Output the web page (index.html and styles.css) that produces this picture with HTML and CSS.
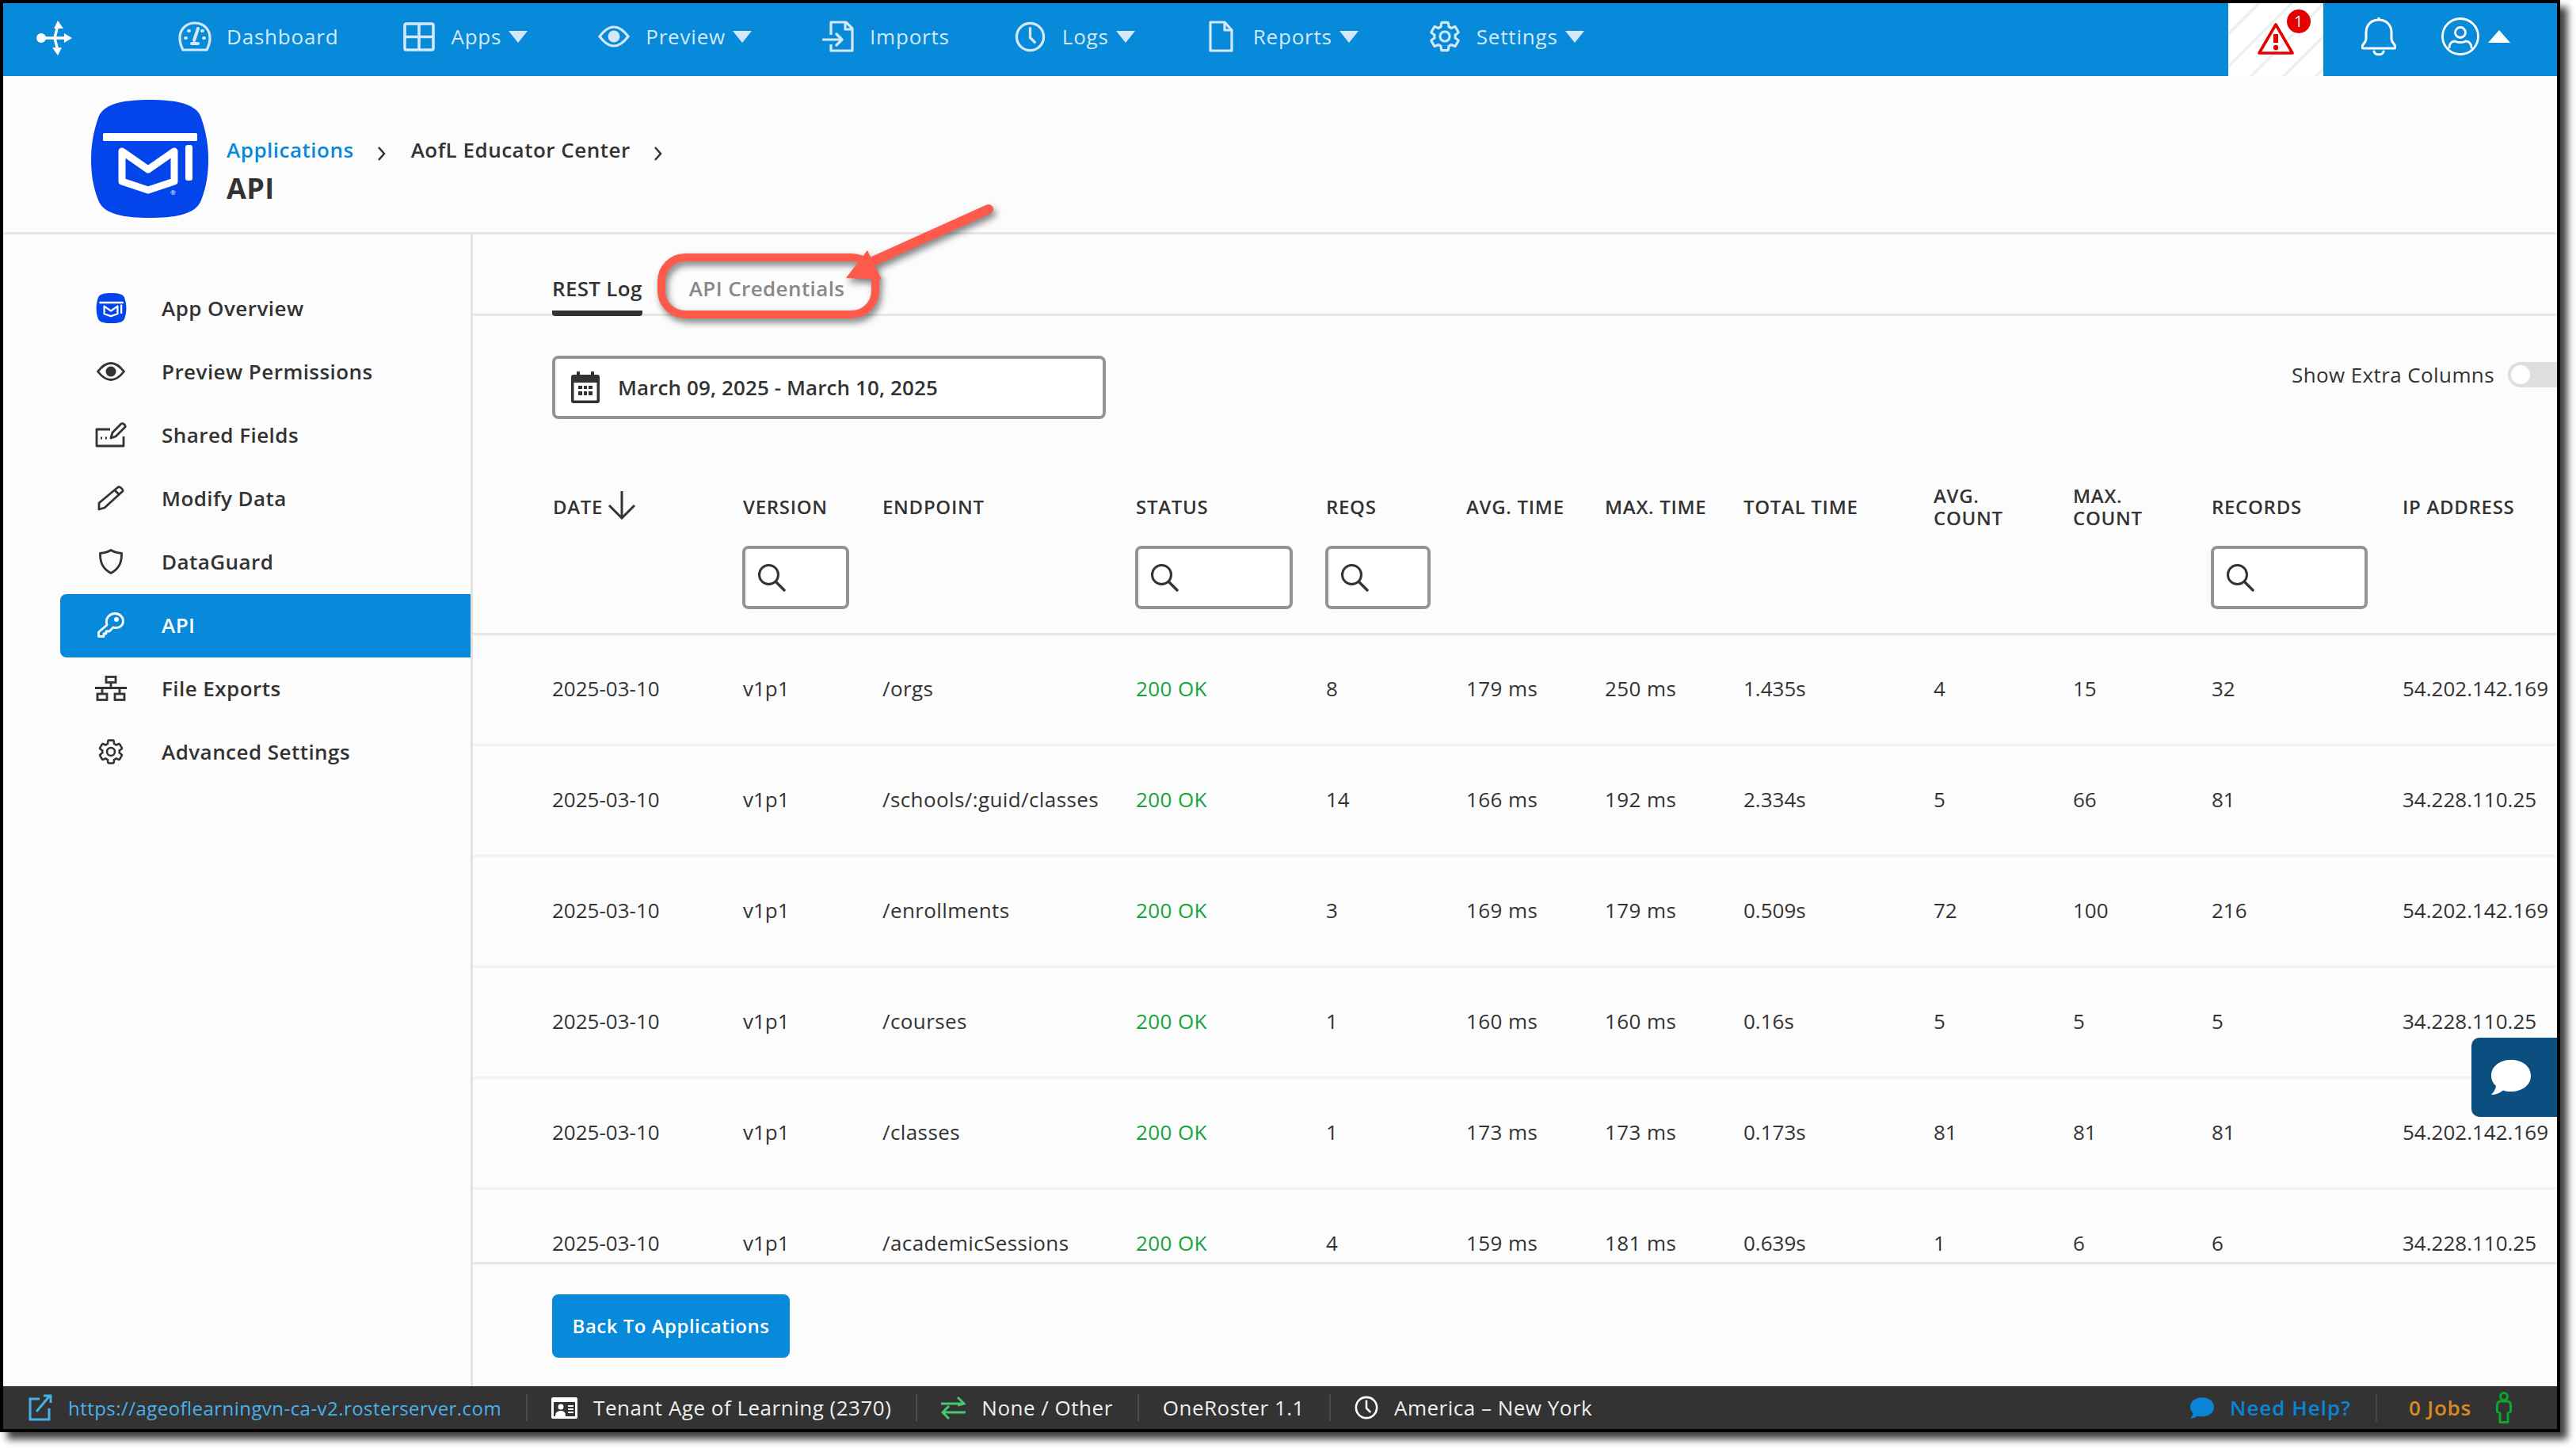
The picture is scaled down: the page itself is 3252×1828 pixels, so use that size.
FILE: index.html
```html
<!DOCTYPE html>
<html lang="en">
<head>
    <meta charset="UTF-8">
    <title>API - AofL Educator Center</title>
    <link rel="stylesheet" href="styles.css">
</head>
<body>
    <svg class="defs" width="0" height="0">
        <symbol id="logo" viewBox="0 0 148 149">
            <path fill="#0445eb" d="M74 0C105 0 130 4 138 20C146 42 148 60 148 75C148 92 146 110 138 129C130 145 105 149 74 149C43 149 18 145 10 129C2 110 0 92 0 75C0 60 2 42 10 20C18 4 43 0 74 0Z"/>
            <rect x="15" y="42" width="119" height="10" rx="1.5" fill="#fff"/>
            <path fill="none" stroke="#fff" stroke-width="9" stroke-linejoin="round" d="M39 65L72 88L105 65V103L72 114L39 103Z"/>
            <rect x="119" y="57" width="9" height="45" rx="3" fill="#fff"/>
        </symbol>
        <symbol id="gear" viewBox="0 0 24 24">
            <path fill="none" stroke="currentColor" stroke-width="1.7" d="M19.14 12.94c.04-.3.06-.61.06-.94 0-.32-.02-.64-.07-.94l2.03-1.58c.18-.14.23-.41.12-.61l-1.92-3.32c-.12-.22-.37-.29-.59-.22l-2.39.96c-.5-.38-1.03-.7-1.62-.94l-.36-2.54c-.04-.24-.24-.41-.48-.41h-3.84c-.24 0-.43.17-.47.41l-.36 2.54c-.59.24-1.13.57-1.62.94l-2.39-.96c-.22-.08-.47 0-.59.22L2.74 8.87c-.12.21-.08.47.12.61l2.03 1.58c-.05.3-.09.63-.09.94s.02.64.07.94l-2.03 1.58c-.18.14-.23.41-.12.61l1.92 3.32c.12.22.37.29.59.22l2.39-.96c.5.38 1.03.7 1.62.94l.36 2.54c.05.24.24.41.48.41h3.84c.24 0 .44-.17.47-.41l.36-2.54c.59-.24 1.13-.56 1.62-.94l2.39.96c.22.08.47 0 .59-.22l1.92-3.32c.12-.22.07-.47-.12-.61l-2.01-1.58z"/>
            <circle cx="12" cy="12" r="3.3" fill="none" stroke="currentColor" stroke-width="1.7"/>
        </symbol>
        <symbol id="clock" viewBox="0 0 40 40">
            <circle cx="20" cy="20" r="17.5" fill="none" stroke="currentColor" stroke-width="3.4"/>
            <path fill="none" stroke="currentColor" stroke-width="3.4" stroke-linecap="round" stroke-linejoin="round" d="M20 9V21L26 27"/>
        </symbol>
        <symbol id="search" viewBox="0 0 36 36">
            <circle cx="14.5" cy="14.5" r="12" fill="none" stroke="#333" stroke-width="3"/>
            <path stroke="#333" stroke-width="3.4" stroke-linecap="round" d="M23.500 23.500L34 34"/>
        </symbol>
        <symbol id="bubble" viewBox="0 0 50 44">
            <path fill="currentColor" d="M25 0C39 0 50 8 50 20C50 32 39 40 25 40C21 40 18 39.500 15 38.500C11 42 6 44 0 44C3 41 5.500 37 6 33C2 29.500 0 25 0 20C0 8 11 0 25 0Z"/>
        </symbol>
    </svg>

    <div class="frame">
        <header class="topnav">
            <svg class="nav-logo" width="46" height="44" viewBox="0 0 46 44">
                <g fill="none" stroke="#fff" stroke-width="3.400" stroke-linecap="round">
                    <path d="M8 22H42M24 22L28 6M24 22L28 38"/>
                </g>
                <g fill="#fff">
                    <circle cx="7" cy="22" r="6"/>
                    <path d="M28 0L35 10H23ZM46 22L36 16V28ZM28 44L21 34H33Z"/>
                </g>
            </svg>

            <a class="nav-item">
                <span class="nav-icon">
                    <svg width="42" height="38" viewBox="0 0 42 38" fill="none" stroke="currentColor" stroke-width="3.200">
                        <path d="M6 36C3 30 2 26 2 21C2 10 10 2 21 2C32 2 40 10 40 21C40 26 39 30 36 36Z" stroke-linejoin="round"/>
                        <path d="M25 9L20 24" stroke-width="4" stroke-linecap="round"/>
                        <path d="M9 21H10M13 12H14M32 21H33M30 12H31M17 28H25" stroke-width="4" stroke-linecap="round"/>
                    </svg>
                </span>
                Dashboard
            </a>
            <a class="nav-item has-caret">
                <span class="nav-icon">
                    <svg width="40" height="37" viewBox="0 0 40 37" fill="none" stroke="currentColor" stroke-width="3.600">
                        <rect x="2" y="2" width="36" height="33" rx="2"/>
                        <path d="M20 2V35M2 18.500H38"/>
                    </svg>
                </span>
                Apps
                <span class="caret"></span>
            </a>
            <a class="nav-item has-caret">
                <span class="nav-icon">
                    <svg width="40" height="28" viewBox="0 0 40 28" fill="none" stroke="currentColor" stroke-width="3.200">
                        <path d="M2 14C8 6 13 2 20 2C27 2 32 6 38 14C32 22 27 26 20 26C13 26 8 22 2 14Z"/>
                        <circle cx="20" cy="14" r="7.500" fill="currentColor" stroke="none"/>
                    </svg>
                </span>
                Preview
                <span class="caret"></span>
            </a>
            <a class="nav-item">
                <span class="nav-icon">
                    <svg width="40" height="40" viewBox="0 0 40 40" fill="none" stroke="currentColor" stroke-width="3.200" stroke-linejoin="round">
                        <path d="M11 18V2H30L38 10V38H11V30"/>
                        <path d="M29 2V11H38"/>
                        <path d="M1 24H25M18 17L25 24L18 31" stroke-linecap="round"/>
                    </svg>
                </span>
                Imports
            </a>
            <a class="nav-item has-caret">
                <span class="nav-icon"><svg width="39" height="39"><use href="#clock"/></svg></span>
                Logs
                <span class="caret"></span>
            </a>
            <a class="nav-item has-caret">
                <span class="nav-icon">
                    <svg width="31" height="40" viewBox="0 0 31 40" fill="none" stroke="currentColor" stroke-width="3.200" stroke-linejoin="round">
                        <path d="M2 2H20L29 12V38H2Z"/>
                        <path d="M20 2V12H29"/>
                    </svg>
                </span>
                Reports
                <span class="caret"></span>
            </a>
            <a class="nav-item has-caret">
                <span class="nav-icon"><svg width="44" height="44"><use href="#gear"/></svg></span>
                Settings
                <span class="caret"></span>
            </a>

            <div class="nav-right">
                <div class="alert-cell">
                    <svg width="46" height="42" viewBox="0 0 46 42" fill="none" stroke="#e60000" stroke-linejoin="round">
                        <path d="M23 3L44 39H2Z" stroke-width="3.600"/>
                        <path d="M23 15V26" stroke-width="6"/>
                        <circle cx="23" cy="32" r="3.200" fill="#e60000" stroke="none"/>
                    </svg>
                    <span class="alert-badge">1</span>
                </div>
                <svg class="bell" width="44" height="50" viewBox="0 0 44 50" fill="none" stroke="#fff" stroke-width="3" stroke-linejoin="round">
                    <path d="M22 1V4M6 28V20C6 10 13 4 22 4C31 4 38 10 38 20V28C38 33 43 35 43 38C43 39.500 42 40 41 40H3C2 40 1 39.500 1 38C1 35 6 33 6 28Z"/>
                    <path d="M16 44C17 49 27 49 28 44" stroke-linecap="round"/>
                </svg>
                <svg class="user" width="48" height="48" viewBox="0 0 48 48" fill="none" stroke="#fff" stroke-width="2.800">
                    <circle cx="24" cy="24" r="22.500"/>
                    <circle cx="24" cy="19" r="6.500"/>
                    <path d="M10 39C10 33 13 30 17 30C21 32 27 32 31 30C35 30 38 33 38 39"/>
                </svg>
                <span class="caret-up"></span>
            </div>
        </header>

        <section class="app-head">
            <svg class="app-logo" width="148" height="149" viewBox="0 0 148 149">
                <use href="#logo" width="148" height="149"/>
                <text x="100" y="120" font-size="8" fill="#fff">®</text>
            </svg>
            <div class="app-title">
                <div class="crumbs">
                    <a class="crumb-link">Applications</a>
                    <svg class="chev" width="12" height="20" viewBox="0 0 12 20"><path d="M2 2L9 10L2 18" fill="none" stroke="#333" stroke-width="2.500"/></svg>
                    <span>AofL Educator Center</span>
                    <svg class="chev" width="12" height="20" viewBox="0 0 12 20"><path d="M2 2L9 10L2 18" fill="none" stroke="#333" stroke-width="2.500"/></svg>
                </div>
                <h1>API</h1>
            </div>
        </section>

        <div class="layout">
            <nav class="sidebar">
                <a class="side-item">
                    <span class="side-icon"><svg width="39" height="38"><use href="#logo"/></svg></span>
                    App Overview
                </a>
                <a class="side-item">
                    <span class="side-icon">
                        <svg width="36" height="24" viewBox="0 0 36 24" fill="none" stroke="currentColor" stroke-width="2.800">
                            <path d="M1.500 12C7 5 12 1.500 18 1.500C24 1.500 29 5 34.500 12C29 19 24 22.500 18 22.500C12 22.500 7 19 1.500 12Z"/>
                            <circle cx="18" cy="12" r="6.500" fill="currentColor" stroke="none"/>
                        </svg>
                    </span>
                    Preview Permissions
                </a>
                <a class="side-item">
                    <span class="side-icon">
                        <svg width="40" height="32" viewBox="0 0 40 32" fill="none" stroke="currentColor" stroke-width="2.800" stroke-linejoin="round">
                            <path d="M19 9H2V30H36V18"/>
                            <path d="M7 20H9M13 20H15" stroke-width="3.200"/>
                            <path d="M20 20L22 13L33 2C35 0.500 39 4 38 6L26 18Z"/>
                        </svg>
                    </span>
                    Shared Fields
                </a>
                <a class="side-item">
                    <span class="side-icon">
                        <svg width="34" height="32" viewBox="0 0 34 32" fill="none" stroke="currentColor" stroke-width="2.800" stroke-linejoin="round">
                            <path d="M2 22L26 2C28 0.800 33 5 32 7L9 28L2 30Z"/>
                            <path d="M22 6L28 12"/>
                        </svg>
                    </span>
                    Modify Data
                </a>
                <a class="side-item">
                    <span class="side-icon">
                        <svg width="30" height="32" viewBox="0 0 30 32" fill="none" stroke="currentColor" stroke-width="2.800" stroke-linejoin="round">
                            <path d="M15 1.500C19 4 24 5 28.500 5.500C29 17 24 26 15 30.500C6 26 1 17 1.500 5.500C6 5 11 4 15 1.500Z"/>
                        </svg>
                    </span>
                    DataGuard
                </a>
                <a class="side-item active">
                    <span class="side-icon">
                        <svg width="34" height="32" viewBox="0 0 34 32" fill="none" stroke="currentColor" stroke-width="2.800" stroke-linejoin="round">
                            <path d="M12 16C9 6 17 1.500 22 1.500C28 1.500 32.500 6 32.500 11C32.500 17 27 21 20 19L15 24H11V27H8V30.500H1.500V25Z"/>
                            <circle cx="24" cy="9" r="3" fill="currentColor" stroke="none"/>
                        </svg>
                    </span>
                    API
                </a>
                <a class="side-item">
                    <span class="side-icon">
                        <svg width="40" height="32" viewBox="0 0 40 32" fill="none" stroke="currentColor" stroke-width="2.800">
                            <rect x="14" y="1.500" width="12" height="7"/>
                            <rect x="3" y="23" width="12" height="7.500"/>
                            <rect x="25" y="23" width="12" height="7.500"/>
                            <path d="M20 8.500V15M0 15.500H40M9 15.500V23M31 15.500V23"/>
                        </svg>
                    </span>
                    File Exports
                </a>
                <a class="side-item">
                    <span class="side-icon"><svg width="36" height="36"><use href="#gear"/></svg></span>
                    Advanced Settings
                </a>
            </nav>

            <main class="content">
                <div class="tabs">
                    <a class="tab current">REST Log</a>
                    <a class="tab">API Credentials</a>
                </div>

                <div class="toolbar">
                    <div class="date-picker">
                        <svg width="36" height="40" viewBox="0 0 36 40">
                            <path fill="#333" d="M7 0H11V4H25V0H29V4H33C35 4 36 5 36 7V37C36 39 35 40 33 40H3C1 40 0 39 0 37V7C0 5 1 4 3 4H7ZM3.500 14V36.500H32.500V14Z"/>
                            <path fill="#333" d="M9 18H14V22H9ZM16 18H20V22H16ZM22 18H27V22H22ZM9 25H14V30H9ZM16 25H20V30H16ZM22 25H27V30H22Z"/>
                        </svg>
                        <span>March 09, 2025 - March 10, 2025</span>
                    </div>
                    <div class="extra-cols">
                        <span>Show Extra Columns</span>
                        <span class="switch"><span class="knob"></span></span>
                    </div>
                </div>

                <div class="table-wrap">
                    <table class="log-table">
                        <colgroup>
                            <col class="c-date"><col class="c-version"><col class="c-endpoint"><col class="c-status">
                            <col class="c-reqs"><col class="c-avg"><col class="c-max"><col class="c-total">
                            <col class="c-avgc"><col class="c-maxc"><col class="c-records"><col class="c-ip">
                        </colgroup>
                        <thead>
                            <tr>
                                <th><div class="th-label"><span>DATE</span>
                                    <svg class="sort" width="36" height="36" viewBox="0 0 36 36" fill="none" stroke="#333" stroke-width="3"><path d="M18 0V34M2 18L18 34L34 18"/></svg>
                                </div></th>
                                <th><div class="th-label">VERSION</div><div class="filter f-version"><svg width="36" height="36"><use href="#search"/></svg></div></th>
                                <th><div class="th-label">ENDPOINT</div></th>
                                <th><div class="th-label">STATUS</div><div class="filter f-status"><svg width="36" height="36"><use href="#search"/></svg></div></th>
                                <th><div class="th-label">REQS</div><div class="filter f-reqs"><svg width="36" height="36"><use href="#search"/></svg></div></th>
                                <th><div class="th-label">AVG. TIME</div></th>
                                <th><div class="th-label">MAX. TIME</div></th>
                                <th><div class="th-label">TOTAL TIME</div></th>
                                <th><div class="th-label"><span>AVG.<br>COUNT</span></div></th>
                                <th><div class="th-label"><span>MAX.<br>COUNT</span></div></th>
                                <th><div class="th-label">RECORDS</div><div class="filter f-records"><svg width="36" height="36"><use href="#search"/></svg></div></th>
                                <th><div class="th-label">IP ADDRESS</div></th>
                            </tr>
                        </thead>
                        <tbody>
                            <tr><td>2025-03-10</td><td>v1p1</td><td>/orgs</td><td class="ok">200 OK</td><td>8</td><td>179 ms</td><td>250 ms</td><td>1.435s</td><td>4</td><td>15</td><td>32</td><td>54.202.142.169</td></tr>
                            <tr><td>2025-03-10</td><td>v1p1</td><td>/schools/:guid/classes</td><td class="ok">200 OK</td><td>14</td><td>166 ms</td><td>192 ms</td><td>2.334s</td><td>5</td><td>66</td><td>81</td><td>34.228.110.25</td></tr>
                            <tr><td>2025-03-10</td><td>v1p1</td><td>/enrollments</td><td class="ok">200 OK</td><td>3</td><td>169 ms</td><td>179 ms</td><td>0.509s</td><td>72</td><td>100</td><td>216</td><td>54.202.142.169</td></tr>
                            <tr><td>2025-03-10</td><td>v1p1</td><td>/courses</td><td class="ok">200 OK</td><td>1</td><td>160 ms</td><td>160 ms</td><td>0.16s</td><td>5</td><td>5</td><td>5</td><td>34.228.110.25</td></tr>
                            <tr><td>2025-03-10</td><td>v1p1</td><td>/classes</td><td class="ok">200 OK</td><td>1</td><td>173 ms</td><td>173 ms</td><td>0.173s</td><td>81</td><td>81</td><td>81</td><td>54.202.142.169</td></tr>
                            <tr><td>2025-03-10</td><td>v1p1</td><td>/academicSessions</td><td class="ok">200 OK</td><td>4</td><td>159 ms</td><td>181 ms</td><td>0.639s</td><td>1</td><td>6</td><td>6</td><td>34.228.110.25</td></tr>
                        </tbody>
                    </table>
                </div>

                <div class="actions">
                    <a class="btn-back">Back To Applications</a>
                </div>
            </main>
        </div>

        <footer class="statusbar">
            <div class="stat">
                <svg width="30" height="34" viewBox="0 0 30 34" fill="none" stroke="#4ab0ea" stroke-width="3">
                    <path d="M14 6H2V32H26V18"/>
                    <path d="M10 22L26 3M19 2H28V11"/>
                </svg>
                <a class="stat-link">https://ageoflearningvn-ca-v2.rosterserver.com</a>
            </div>
            <div class="stat">
                <svg width="33" height="27" viewBox="0 0 33 27">
                    <path fill="#fff" fill-rule="evenodd" d="M2 0H31C32 0 33 1 33 2V25C33 26 32 27 31 27H2C1 27 0 26 0 25V2C0 1 1 0 2 0ZM3 6V24H30V6Z"/>
                    <circle cx="12" cy="12" r="3.500" fill="#fff"/>
                    <path fill="#fff" d="M5 24C5 19 8 17 12 17C16 17 18 19 18 24ZM21 10H28V12H21ZM21 14H28V16H21ZM21 18H28V20H21Z"/>
                </svg>
                <span>Tenant Age of Learning (2370)</span>
            </div>
            <div class="stat">
                <svg width="31" height="30" viewBox="0 0 31 30" fill="none" stroke="#45c86e" stroke-width="3">
                    <path d="M0 10H29M21 2L29 10L21 12"/>
                    <path d="M31 21H2M10 13L2 21L10 29"/>
                </svg>
                <span>None / Other</span>
            </div>
            <div class="stat"><span>OneRoster 1.1</span></div>
            <div class="stat no-line">
                <svg class="stat-clock" width="30" height="30"><use href="#clock"/></svg>
                <span>America – New York</span>
            </div>

            <div class="stat-right">
                <div class="stat help">
                    <svg width="30" height="27"><use href="#bubble"/></svg>
                    <span>Need Help?</span>
                </div>
                <div class="stat jobs no-line">
                    <span>0 Jobs</span>
                    <svg width="20" height="40" viewBox="0 0 20 40" fill="none" stroke="#0da52e" stroke-width="3">
                        <circle cx="10" cy="6" r="4.500"/>
                        <path d="M6 12H14C17 12 18.500 14 18.500 17V25L15 27V38.500H5V27L1.500 25V17C1.500 14 3 12 6 12Z" stroke-linejoin="round"/>
                    </svg>
                </div>
            </div>
        </footer>

        <a class="chat-tab"><svg width="50" height="44"><use href="#bubble"/></svg></a>

        <svg class="callout" width="440" height="160" viewBox="0 0 440 160">
            <rect x="5" y="80" width="270" height="72" rx="30" fill="none" stroke="#fd5a4c" stroke-width="10"/>
            <path d="M418 19L265 88" fill="none" stroke="#fd5a4c" stroke-width="12" stroke-linecap="round"/>
            <path d="M238 106L265 71L283 108Z" fill="#fd5a4c"/>
        </svg>
    </div>
</body>
</html>
```

FILE: styles.css
```css
* {
    box-sizing: border-box;
}
html, body {
    margin: 0;
    padding: 0;
    background: #fff;
}
body {
    width: 3252px;
    height: 1828px;
    overflow: hidden;
    font-family: "Open Sans", Arial, sans-serif;
    font-size: 26px;
    letter-spacing: 0.4px;
    color: #333;
}
.defs {
    position: absolute;
}
a {
    text-decoration: none;
    color: inherit;
}

.frame {
    position: relative;
    width: 3232px;
    height: 1808px;
    border: 4px solid #000;
    background: #fcfcfc;
    display: flex;
    flex-direction: column;
    box-shadow: 9px 9px 9px rgba(0, 0, 0, 0.75);
}

/* top nav */
.topnav {
    height: 92px;
    flex: none;
    background: #068ad9;
    color: #d5e8f8;
    display: flex;
    align-items: center;
    padding-left: 41px;
}
.nav-logo {
    margin-right: 133px;
    margin-bottom: 4px;
}
.nav-item {
    display: flex;
    align-items: center;
    gap: 18px;
    margin-right: 80px;
    margin-bottom: 8px;
    letter-spacing: 0.8px;
}
.nav-item.has-caret {
    margin-right: 87px;
}
.nav-icon {
    width: 44px;
    display: flex;
    justify-content: center;
}
.caret {
    width: 0;
    height: 0;
    margin-left: -9px;
    border-left: 12px solid transparent;
    border-right: 12px solid transparent;
    border-top: 15px solid #d5e8f8;
}
.nav-right {
    margin-left: auto;
    height: 100%;
    display: flex;
    align-items: center;
    padding-right: 59px;
}
.alert-cell {
    position: relative;
    width: 120px;
    height: 100%;
    display: flex;
    justify-content: center;
    align-items: center;
    padding-bottom: 2px;
    background: repeating-linear-gradient(135deg, #fff, #fff 26px, #efefef 26px, #efefef 29px);
}
.alert-badge {
    position: absolute;
    top: 8px;
    right: 16px;
    width: 30px;
    height: 30px;
    border-radius: 50%;
    background: #e60000;
    color: #fff;
    font-size: 20px;
    line-height: 30px;
    text-align: center;
}
.bell {
    margin-left: 48px;
    margin-bottom: 8px;
}
.user {
    margin-left: 57px;
    margin-bottom: 8px;
}
.caret-up {
    width: 0;
    height: 0;
    margin-left: 11px;
    margin-bottom: 8px;
    border-left: 14px solid transparent;
    border-right: 14px solid transparent;
    border-bottom: 16px solid #fff;
}

/* app header */
.app-head {
    height: 200px;
    flex: none;
    display: flex;
    align-items: flex-start;
    padding: 30px 0 0 111px;
    border-bottom: 3px solid #e6e6e6;
}
.app-title {
    margin-left: 23px;
    padding-top: 45px;
}
.crumbs {
    display: flex;
    align-items: center;
    font-weight: 600;
    line-height: 36px;
    letter-spacing: 0.5px;
}
.crumb-link {
    color: #068ad9;
}
.chev {
    margin: 10px 31px 0 29px;
}
h1 {
    margin: 7px 0 0;
    font-size: 36px;
    line-height: 48px;
    font-weight: 700;
}

.layout {
    flex: 1;
    display: flex;
    min-height: 0;
}

/* sidebar */
.sidebar {
    width: 593px;
    flex: none;
    padding: 54px 0 0 72px;
    border-right: 3px solid #e2e2e2;
}
.side-item {
    height: 80px;
    display: flex;
    align-items: center;
    gap: 44px;
    padding: 0 0 2px 44px;
    font-weight: 600;
    letter-spacing: 0.45px;
    border-radius: 8px 0 0 8px;
}
.side-item.active {
    background: #068ad9;
    color: #fff;
}
.side-icon {
    width: 40px;
    display: flex;
    justify-content: center;
}

/* main */
.content {
    flex: 1;
    min-width: 0;
    display: flex;
    flex-direction: column;
}
.tabs {
    height: 103px;
    flex: none;
    display: flex;
    align-items: flex-end;
    gap: 59px;
    padding-left: 100px;
    border-bottom: 3px solid #e6e6e6;
}
.tab {
    height: 72px;
    margin-bottom: -3px;
    font-weight: 600;
    color: #888;
    line-height: 74px;
}
.tab.current {
    color: #333;
    letter-spacing: 0.3px;
    border-bottom: 7px solid #333;
    border-radius: 4px;
}
.toolbar {
    flex: none;
    height: 130px;
    padding: 50px 0 0 100px;
    display: flex;
    justify-content: space-between;
}
.date-picker {
    width: 699px;
    height: 80px;
    display: flex;
    align-items: center;
    gap: 23px;
    padding-left: 20px;
    border: 4px solid #949494;
    border-radius: 8px;
    background: #fff;
    font-weight: 600;
    letter-spacing: 0.1px;
}
.extra-cols {
    display: flex;
    align-items: center;
    gap: 17px;
    height: 32px;
    margin-top: 8px;
}
.switch {
    width: 62px;
    height: 32px;
    background: #dedede;
    border-radius: 16px 0 0 16px;
    padding: 4px;
}
.knob {
    display: block;
    width: 24px;
    height: 24px;
    background: #fff;
    border-radius: 50%;
}

/* table */
.table-wrap {
    margin-top: 73px;
    padding-top: 10px;
    height: 994px;
    flex: none;
    overflow: hidden;
    border-bottom: 3px solid #e6e6e6;
}
.log-table {
    width: 100%;
    table-layout: fixed;
    border-collapse: separate;
    border-spacing: 0;
}
.c-date { width: 340px; }
.c-version { width: 176px; }
.c-endpoint { width: 320px; }
.c-status { width: 240px; }
.c-reqs { width: 177px; }
.c-avg { width: 175px; }
.c-max { width: 175px; }
.c-total { width: 240px; }
.c-avgc { width: 176px; }
.c-maxc { width: 175px; }
.c-records { width: 241px; }
.log-table th {
    text-align: left;
    vertical-align: top;
    height: 190px;
    padding: 0;
    font-size: 24px;
    font-weight: 600;
    line-height: 28px;
    letter-spacing: 0.7px;
    border-bottom: 3px solid #e6e6e6;
}
.log-table th:first-child,
.log-table td:first-child {
    padding-left: 100px;
}
.th-label {
    min-height: 56px;
    display: flex;
    align-items: center;
    padding-left: 1px;
}
.sort {
    margin-left: 6px;
    margin-top: -4px;
}
.filter {
    height: 80px;
    margin-top: 21px;
    display: flex;
    align-items: center;
    padding-left: 15px;
    border: 4px solid #949494;
    border-radius: 8px;
    background: #fff;
}
.f-version { width: 135px; }
.f-status { width: 199px; }
.f-reqs { width: 133px; }
.f-records { width: 198px; }
.log-table td {
    height: 140px;
    padding: 0 0 4px 1px;
    white-space: nowrap;
    letter-spacing: 0;
    border-bottom: 3px solid #f3f3f3;
}
.log-table td:nth-child(3),
.log-table td:nth-child(6),
.log-table td:nth-child(7) {
    letter-spacing: 0.4px;
}
.log-table td.ok {
    color: #13a538;
    letter-spacing: 0.4px;
}

.actions {
    padding: 38px 0 0 100px;
}
.btn-back {
    display: inline-block;
    width: 300px;
    height: 80px;
    border-radius: 8px;
    background: #068ad9;
    color: #fff;
    font-size: 24px;
    font-weight: 600;
    line-height: 80px;
    text-align: center;
    letter-spacing: 0.5px;
}

/* status bar */
.statusbar {
    height: 54px;
    flex: none;
    background: #333;
    color: #eee;
    display: flex;
    align-items: center;
    padding-left: 2px;
    letter-spacing: 0.5px;
}
.stat {
    display: flex;
    align-items: center;
    gap: 20px;
    height: 34px;
    padding: 0 31px 0 30px;
    border-right: 2px solid #4b4b4b;
}
.stat.no-line {
    border-right: none;
}
.stat-link {
    color: #4ab0ea;
    font-size: 24px;
    letter-spacing: 0.45px;
}
.stat-clock {
    color: #fff;
}
.stat-right {
    margin-left: auto;
    display: flex;
    align-items: center;
    padding-right: 26px;
}
.help {
    color: #0a85d6;
    font-weight: 600;
    letter-spacing: 1px;
}
.jobs {
    color: #d98a1f;
    font-weight: 600;
    gap: 31px;
    padding-left: 40px;
    letter-spacing: 0.8px;
}

/* floating */
.chat-tab {
    position: absolute;
    right: 0;
    top: 1306px;
    width: 108px;
    height: 100px;
    padding-right: 8px;
    background: #0a4f80;
    border-radius: 10px 0 0 10px;
    color: #fff;
    display: flex;
    justify-content: center;
    align-items: center;
}
.callout {
    position: absolute;
    left: 826px;
    top: 241px;
    filter: drop-shadow(3px 5px 4px rgba(0, 0, 0, 0.5));
}
```
